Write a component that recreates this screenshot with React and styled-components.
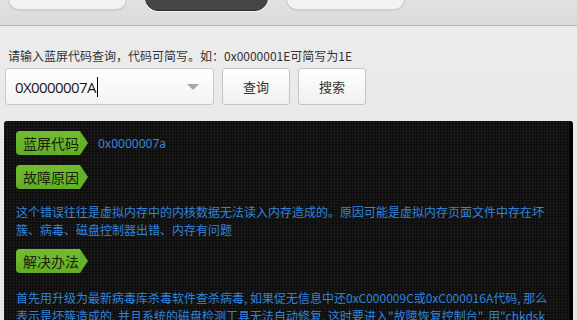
import React from 'react';
import styled, { createGlobalStyle } from 'styled-components';

const GlobalStyle = createGlobalStyle`
  html, body {
    margin: 0;
    padding: 0;
    background: #e9e9e9;
    font-family: "Liberation Sans", "Noto Sans CJK SC", sans-serif;
    overflow: hidden;
  }
`;

const Page = styled.div`
  width: 577px;
  height: 320px;
  overflow: hidden;
  background: linear-gradient(180deg, #ececec 0%, #e6e6e6 100%);
`;

const TabBar = styled.div`
  height: 25px;
  display: flex;
  gap: 18px;
  padding-left: 8px;
  background: linear-gradient(180deg, #e2e2e2 0%, #dadada 100%);
  border-bottom: 1px solid #b2b2b2;
  overflow: hidden;
`;

const Tab = styled.div`
  width: 119px;
  height: 30px;
  margin-top: -20px;
  box-sizing: border-box;
  border-radius: 0 0 11px 11px;
  background: ${({ $active }) => ($active ? '#464646' : '#f2f2f2')};
  border: 1px solid ${({ $active }) => ($active ? '#2a2a2a' : '#cfcfcf')};
  box-shadow: ${({ $active }) => ($active ? '0 1px 0 #f4f4f4' : '0 1px 1px rgba(0,0,0,0.08)')};
  ${({ $active }) => $active && 'width: 123px; height: 32px; margin-top: -21px; border-radius: 0 0 13px 13px;'}
`;

const SearchArea = styled.div`
  padding: 22px 5px 0 5px;
`;

const Hint = styled.div`
  font-family: "Noto Sans CJK SC", sans-serif;
  font-size: 12px;
  line-height: 16px;
  color: #333;
  padding-left: 3px;
`;

const SearchRow = styled.div`
  display: flex;
  gap: 8px;
  margin-top: 4px;
`;

const InputBox = styled.div`
  width: 209px;
  height: 37px;
  box-sizing: border-box;
  display: flex;
  align-items: center;
  justify-content: space-between;
  padding: 0 14px 0 9px;
  border: 1px solid #c9c9c9;
  border-radius: 3px;
  background: linear-gradient(180deg, #ffffff 0%, #f3f3f3 100%);
`;

const InputText = styled.span`
  font-family: "Open Sans", "Liberation Sans", sans-serif;
  font-size: 15px;
  color: #1a1a1a;
  display: flex;
  align-items: center;
  letter-spacing: -0.6px;
`;

const Caret = styled.span`
  display: inline-block;
  width: 1px;
  height: 20px;
  background: #000;
  margin-left: 1px;
`;

const Arrow = styled.span`
  width: 0;
  height: 0;
  border-left: 6px solid transparent;
  border-right: 6px solid transparent;
  border-top: 6px solid #a6a6a6;
`;

const Button = styled.button`
  width: 68px;
  height: 37px;
  box-sizing: border-box;
  border: 1px solid #c4c4c4;
  border-radius: 3px;
  background: linear-gradient(180deg, #ffffff 0%, #f0f0f0 100%);
  font-family: "Noto Sans CJK SC", sans-serif;
  font-size: 13px;
  color: #333;
  cursor: pointer;
  padding: 0;
`;

const Panel = styled.div`
  margin: 16px 4px 0 4px;
  height: 260px;
  box-sizing: border-box;
  padding: 10px 20px 0 12px;
  border-radius: 3px 3px 0 0;
  border-right: 4px solid #000;
  background-color: #0d0d0d;
  background-image:
    repeating-linear-gradient(90deg, rgba(255,255,255,0.035) 0 1px, transparent 1px 3px),
    repeating-linear-gradient(0deg, rgba(255,255,255,0.035) 0 1px, transparent 1px 3px);
`;

const Row = styled.div`
  display: flex;
  align-items: center;
  gap: 10px;
  margin-bottom: ${({ $gap }) => $gap || 10}px;
`;

const Tag = styled.div`
  position: relative;
  height: 24px;
  box-sizing: border-box;
  padding: 0 1px 0 7px;
  margin-right: 8px;
  display: flex;
  align-items: center;
  background: linear-gradient(180deg, #72bd2f 0%, #62ad25 100%);
  border-radius: 4px 0 0 4px;
  font-family: "Noto Sans CJK SC", sans-serif;
  font-size: 14px;
  color: #16220b;

  &::after {
    content: '';
    position: absolute;
    right: -8px;
    top: 0;
    border-top: 12px solid transparent;
    border-bottom: 12px solid transparent;
    border-left: 8px solid #67b128;
  }
`;

const Code = styled.span`
  font-family: "Noto Sans", "Liberation Sans", sans-serif;
  font-size: 12px;
  color: #3787de;
`;

const Text = styled.p`
  margin: 0 0 ${({ $mb }) => $mb || 0}px 0;
  font-family: "Noto Sans CJK SC", sans-serif;
  font-size: 12px;
  line-height: 18px;
  color: #3284db;
`;

export default function App() {
  return (
    <Page>
      <GlobalStyle />
      <TabBar>
        <Tab />
        <Tab $active />
        <Tab />
      </TabBar>
      <SearchArea>
        <Hint>请输入蓝屏代码查询，代码可简写。如：0x0000001E可简写为1E</Hint>
        <SearchRow>
          <InputBox>
            <InputText>0X0000007A<Caret /></InputText>
            <Arrow />
          </InputBox>
          <Button>查询</Button>
          <Button>搜索</Button>
        </SearchRow>
      </SearchArea>
      <Panel>
        <Row>
          <Tag>蓝屏代码</Tag>
          <Code>0x0000007a</Code>
        </Row>
        <Row $gap={14}>
          <Tag>故障原因</Tag>
        </Row>
        <Text $mb={10}>
          这个错误往往是虚拟内存中的内核数据无法读入内存造成的。原因可能是虚拟内存页面文件中存在坏簇、病毒、磁盘控制器出错、内存有问题
        </Text>
        <Row $gap={16}>
          <Tag>解决办法</Tag>
        </Row>
        <Text>
          首先用升级为最新病毒库杀毒软件查杀病毒, 如果促无信息中还0xC000009C或0xC000016A代码, 那么表示是坏簇造成的, 并且系统的磁盘检测工具无法自动修复, 这时要进入"故障恢复控制台", 用"chkdsk /r"命令进行手动修复。
        </Text>
      </Panel>
    </Page>
  );
}
